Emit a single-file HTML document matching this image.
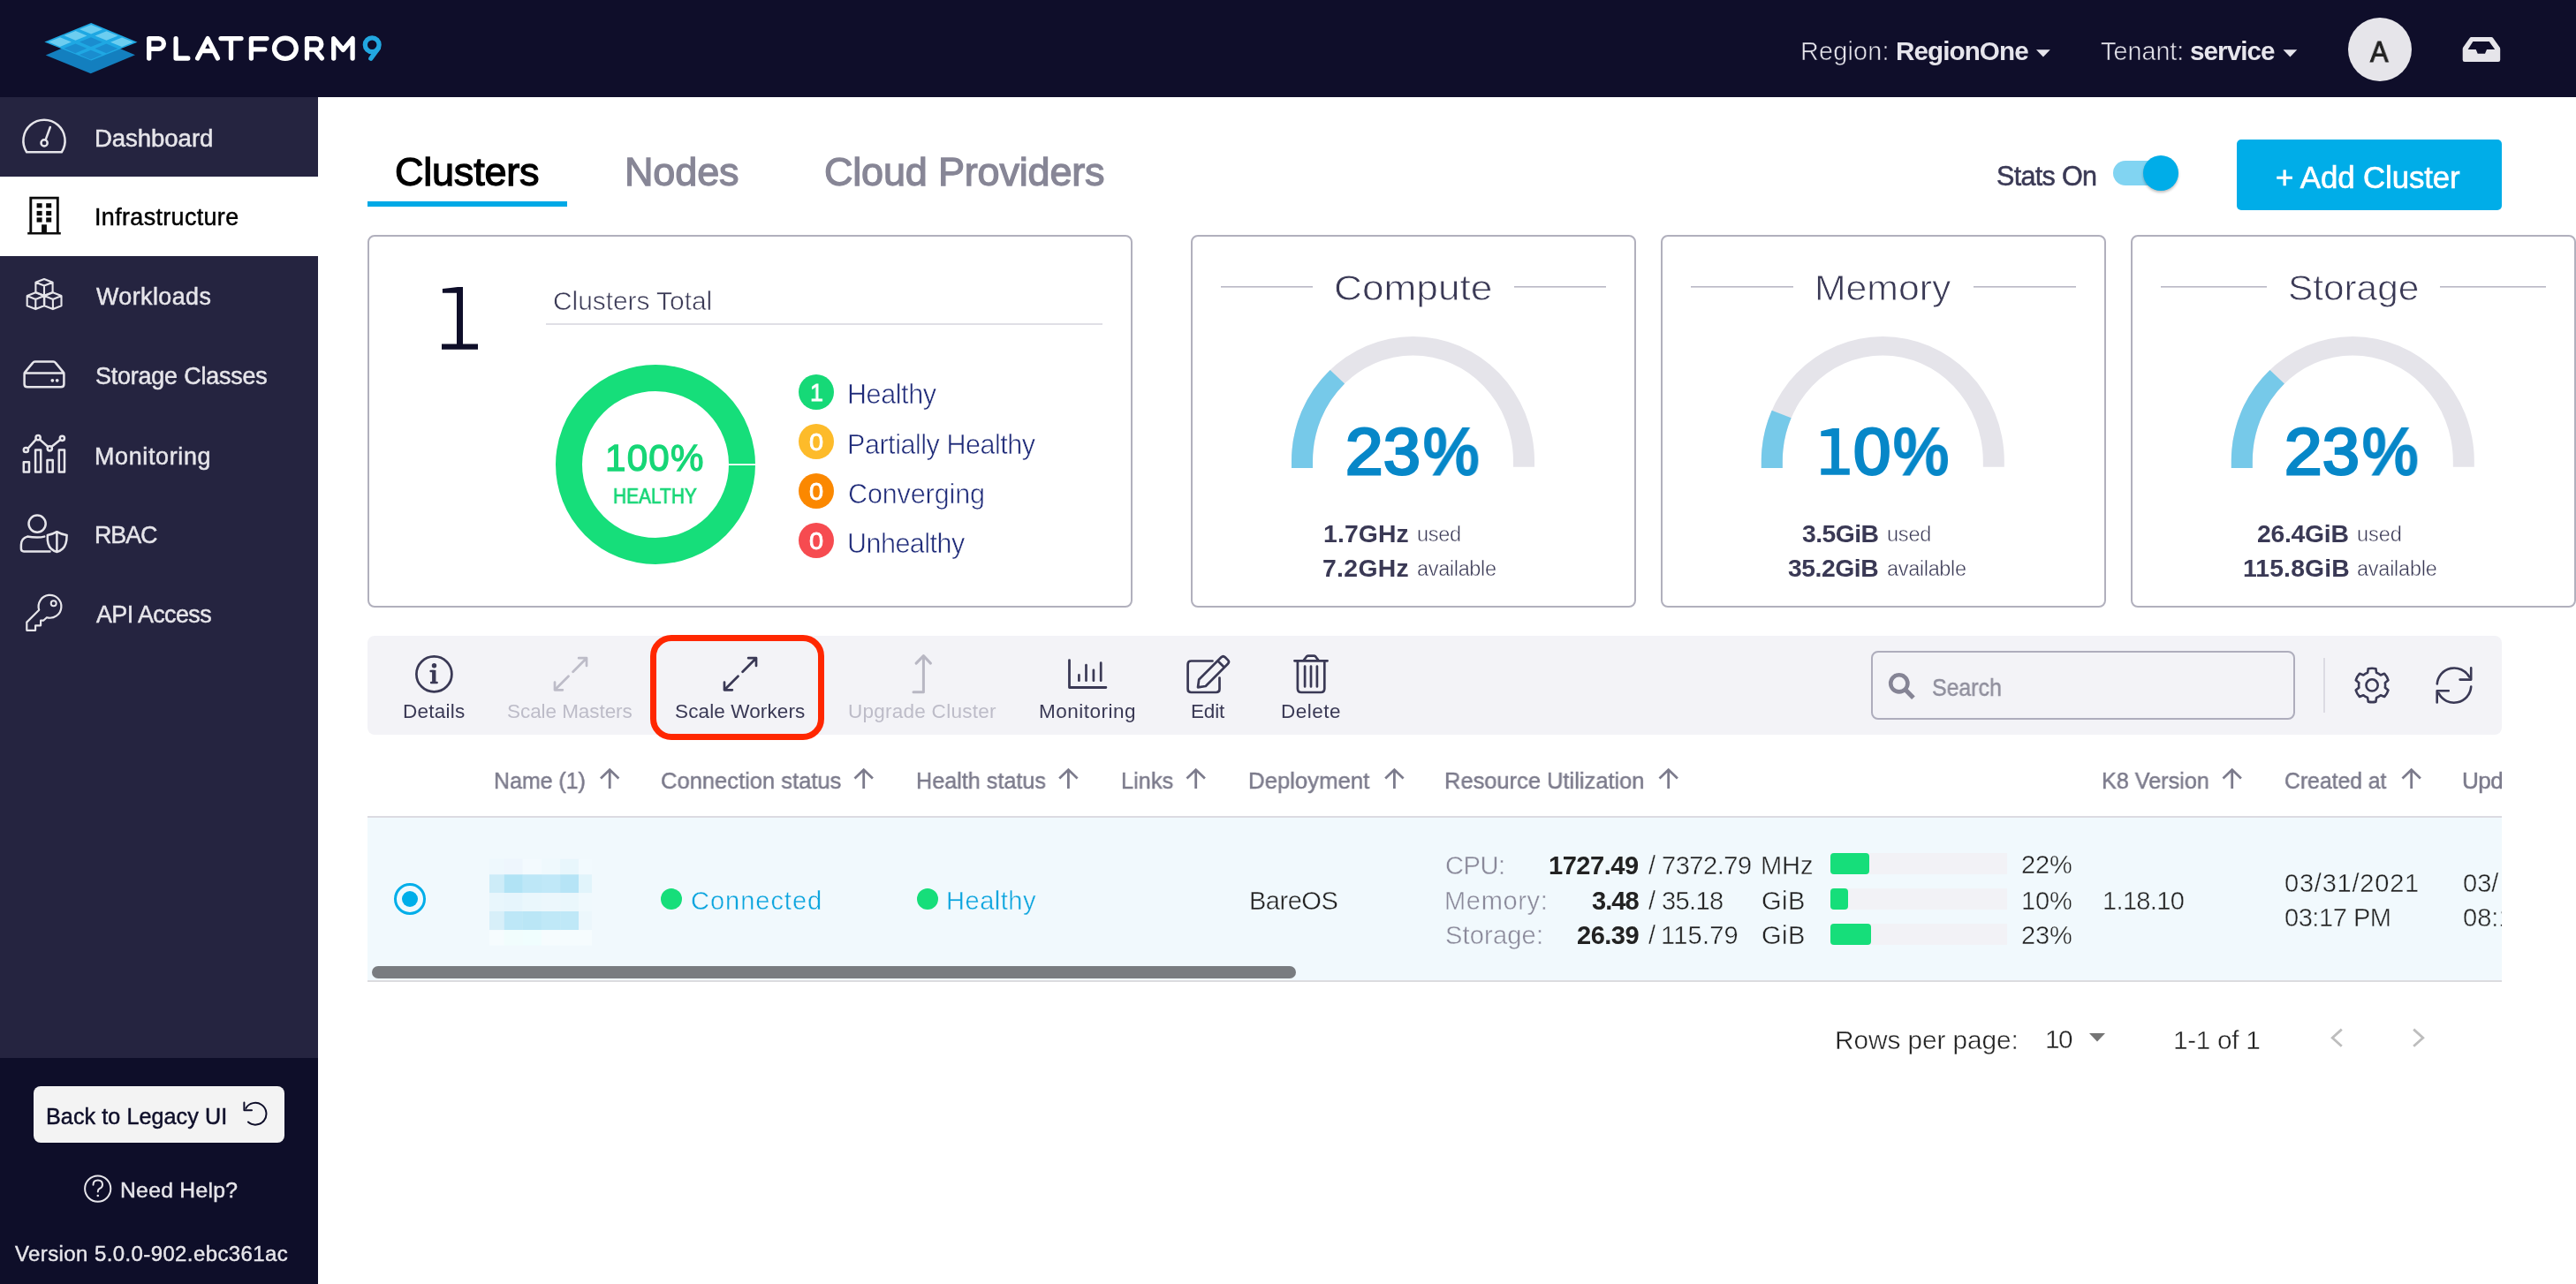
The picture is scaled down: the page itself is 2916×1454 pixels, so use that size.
<!DOCTYPE html>
<html><head><meta charset="utf-8"><title>Platform9 - Clusters</title>
<style>
html,body{margin:0;padding:0;}
body{width:2916px;height:1454px;position:relative;overflow:hidden;background:#fff;font-family:"Liberation Sans",sans-serif;}
.t{position:absolute;line-height:1;white-space:nowrap;will-change:transform;}
.a{position:absolute;}
svg{position:absolute;overflow:visible;}
</style></head><body>
<div class="a" style="left:0px;top:0px;width:2916px;height:110px;background:#0f0e2a;"></div><div class="a" style="left:0px;top:110px;width:360px;height:1088px;background:#252440;"></div><div class="a" style="left:0px;top:200px;width:360px;height:90px;background:#ffffff;"></div><div class="a" style="left:0px;top:1198px;width:360px;height:256px;background:#0e0e29;"></div><div class="a" style="left:38px;top:1230px;width:284px;height:64px;background:#f3f3f3;border-radius:8px;"></div><div class="a" style="left:416px;top:228px;width:226px;height:6px;background:#00a9e6;"></div><div class="a" style="left:2392px;top:182px;width:56px;height:28px;background:#81d4f2;border-radius:14px;"></div><div class="a" style="left:2426px;top:176px;width:40px;height:40px;border-radius:50%;background:#00ade8;box-shadow:0 2px 3px rgba(0,0,0,0.25);"></div><div class="a" style="left:2532px;top:158px;width:300px;height:80px;background:#00ade8;border-radius:5px;"></div><div class="a" style="left:416px;top:266px;width:862px;height:418px;border:2px solid #b1b0bd;border-radius:8px;"></div><div class="a" style="left:1348px;top:266px;width:500px;height:418px;border:2px solid #b1b0bd;border-radius:8px;"></div><div class="a" style="left:1880px;top:266px;width:500px;height:418px;border:2px solid #b1b0bd;border-radius:8px;"></div><div class="a" style="left:2412px;top:266px;width:500px;height:418px;border:2px solid #b1b0bd;border-radius:8px;"></div><div class="a" style="left:618px;top:365.7px;width:630px;height:2px;background:#e0dfe6;"></div><div class="a" style="left:416px;top:720px;width:2416px;height:112px;background:#f3f3f7;border-radius:8px;"></div><div class="a" style="left:2118px;top:737px;width:476px;height:74px;border:2px solid #aeadbc;border-radius:8px;"></div><div class="a" style="left:2630px;top:744.5px;width:2px;height:62.5px;background:#dcdbe3;"></div><div class="a" style="left:416px;top:924px;width:2416px;height:2px;background:#dcdbe2;"></div><div class="a" style="left:416px;top:926px;width:2416px;height:184px;background:#f1f9fd;"></div><div class="a" style="left:416px;top:1110px;width:2416px;height:2px;background:#dcdcdf;"></div><div class="a" style="left:420.5px;top:1094px;width:1046px;height:14px;background:#797c80;border-radius:7px;"></div><div class="a" style="left:445.8px;top:999.7px;width:36.2px;height:36.2px;box-sizing:border-box;border:3.7px solid #00aee9;border-radius:50%;"></div><div class="a" style="left:454.8px;top:1008.7px;width:18.3px;height:18.3px;border-radius:50%;background:#00aee9;"></div><div class="a" style="left:748px;top:1006px;width:24.4px;height:24.4px;border-radius:50%;background:#16de7a;"></div><div class="a" style="left:1038px;top:1006px;width:24.4px;height:24.4px;border-radius:50%;background:#16de7a;"></div><div class="a" style="left:2072px;top:966px;width:200px;height:23.6px;background:#f2f2f6;"></div><div class="a" style="left:2072px;top:1006px;width:200px;height:23.6px;background:#f2f2f6;"></div><div class="a" style="left:2072px;top:1046px;width:200px;height:23.6px;background:#f2f2f6;"></div><div class="a" style="left:2072px;top:966px;width:44px;height:23.6px;background:#16de7a;border-radius:4px;"></div><div class="a" style="left:2072px;top:1006px;width:20px;height:23.6px;background:#16de7a;border-radius:4px;"></div><div class="a" style="left:2072px;top:1046px;width:46px;height:23.6px;background:#16de7a;border-radius:4px;"></div><svg style="left:0;top:0" width="900" height="1200"><rect x="554" y="972.8" width="17.0" height="17.7" fill="#eef8fd"/><rect x="570.8" y="972.8" width="21.1" height="17.7" fill="#eef6fd"/><rect x="591.7" y="972.8" width="21.4" height="17.7" fill="#f3fafe"/><rect x="612.9" y="972.8" width="21.4" height="17.7" fill="#eff9fd"/><rect x="634.1" y="972.8" width="21.2" height="17.7" fill="#e8f6fc"/><rect x="655.1" y="972.8" width="14.9" height="17.7" fill="#f2fafe"/><rect x="554" y="990.3" width="17.0" height="21.0" fill="#cdecf8"/><rect x="570.8" y="990.3" width="21.1" height="21.0" fill="#b1e3f5"/><rect x="591.7" y="990.3" width="21.4" height="21.0" fill="#bde7f7"/><rect x="612.9" y="990.3" width="21.4" height="21.0" fill="#c0e8f8"/><rect x="634.1" y="990.3" width="21.2" height="21.0" fill="#b6e4f6"/><rect x="655.1" y="990.3" width="14.9" height="21.0" fill="#e1f4fb"/><rect x="554" y="1011.1" width="17.0" height="21.1" fill="#e8f6fc"/><rect x="570.8" y="1011.1" width="21.1" height="21.1" fill="#e6f5fc"/><rect x="591.7" y="1011.1" width="21.4" height="21.1" fill="#eaf7fc"/><rect x="612.9" y="1011.1" width="21.4" height="21.1" fill="#ecf7fc"/><rect x="634.1" y="1011.1" width="21.2" height="21.1" fill="#eaf7fc"/><rect x="655.1" y="1011.1" width="14.9" height="21.1" fill="#f0f9fd"/><rect x="554" y="1032" width="17.0" height="21.3" fill="#d7eff9"/><rect x="570.8" y="1032" width="21.1" height="21.3" fill="#bde7f7"/><rect x="591.7" y="1032" width="21.4" height="21.3" fill="#bae6f6"/><rect x="612.9" y="1032" width="21.4" height="21.3" fill="#bfe8f7"/><rect x="634.1" y="1032" width="21.2" height="21.3" fill="#bfe8f7"/><rect x="655.1" y="1032" width="14.9" height="21.3" fill="#ecf7fc"/><rect x="554" y="1053.1" width="17.0" height="17.6" fill="#f6fcfe"/><rect x="570.8" y="1053.1" width="21.1" height="17.6" fill="#f1fdfd"/><rect x="591.7" y="1053.1" width="21.4" height="17.6" fill="#f0fefe"/><rect x="612.9" y="1053.1" width="21.4" height="17.6" fill="#f6fcfe"/><rect x="634.1" y="1053.1" width="21.2" height="17.6" fill="#f5fcfe"/><rect x="655.1" y="1053.1" width="14.9" height="17.6" fill="#f6fcfe"/></svg><svg style="left:0;top:0" width="200" height="100"><polygon points="51.70,62.50 102.70,41.00 153.00,62.20 102.70,83.20" fill="#137fbf"/><polygon points="103.20,26.00 155.50,47.80 103.20,68.50 50.40,47.50" fill="#1fa8e3"/><polygon points="103.18,27.88 116.08,33.25 103.06,38.56 90.15,33.18" fill="#6ccdf0"/><polygon points="85.58,35.04 98.48,40.42 85.45,45.72 72.55,40.35" fill="#6ccdf0"/><polygon points="67.98,42.21 80.88,47.59 67.85,52.89 54.95,47.51" fill="#6ccdf0"/><polygon points="120.61,35.14 133.51,40.52 120.49,45.82 107.59,40.45" fill="#6ccdf0"/><polygon points="103.01,42.31 115.91,47.69 102.89,52.99 89.99,47.61" fill="#1a8dcf"/><polygon points="85.41,49.48 98.31,54.85 85.29,60.16 72.39,54.78" fill="#1a8dcf"/><polygon points="138.04,42.41 150.95,47.79 137.92,53.09 125.02,47.71" fill="#6ccdf0"/><polygon points="120.44,49.58 133.35,54.95 120.32,60.26 107.42,54.88" fill="#1a8dcf"/><polygon points="102.84,56.74 115.75,62.12 102.72,67.42 89.82,62.05" fill="#1a8dcf"/></svg><svg style="left:0;top:0" width="460" height="100"><path d="M168.7 66.0 V43.6 H179.5 A5.6 5.6 0 0 1 179.5 55.4 H168.7 M199.1 43.6 V66.0 H212.8 M223.6 66.0 L235.1 43.6 L246.4 66.0 M228.2 57.6 H242.0 M250.0 43.6 H273.0 M261.5 43.6 V66.0 M302.0 43.6 H284.4 V66.0 M284.4 55.8 H299.8 M335.3 54.8 A12.4 11.6 0 1 1 310.5 54.8 A12.4 11.6 0 1 1 335.3 54.8 Z M347.5 66.0 V43.6 H357.5 A5.7 5.7 0 0 1 357.5 56.2 H347.5 M356.5 56.2 L364.4 66.0 M377.7 66.0 V43.6 L388.4 56.5 L399.1 43.6 V66.0" fill="none" stroke="#ffffff" stroke-width="5.3" stroke-linecap="round" stroke-linejoin="round"/><circle cx="421.2" cy="50.7" r="7.9" fill="none" stroke="#22a7e0" stroke-width="5.3"/><path d="M428.2 54.6 L419.8 66.2" fill="none" stroke="#22a7e0" stroke-width="5.3" stroke-linecap="round"/></svg><svg style="left:0;top:0" width="2916" height="110"><polygon points="2305.00,56.20 2320.80,56.20 2312.90,64.60" fill="#e6e5ec"/><polygon points="2584.50,56.20 2600.30,56.20 2592.40,64.60" fill="#e6e5ec"/><circle cx="2694" cy="56" r="36" fill="#e6e5ea"/><path fill="#e6e5ea" fill-rule="evenodd" d="M2797.5 42 H2820.2 Q2821.4 42 2822.1 43 L2829.6 53.5 Q2830.2 54.4 2830.2 55.6 V67.8 Q2830.2 70 2828 70 H2790 Q2787.7 70 2787.7 67.8 V55.6 Q2787.7 54.4 2788.3 53.5 L2795.7 43 Q2796.4 42 2797.5 42 Z M2799.4 46.9 H2817.7 L2824.2 55.9 H2815 L2813 60.7 H2804.7 L2802.7 55.9 H2793.7 Z"/></svg><svg style="left:0;top:0" width="360" height="1454" fill="none" stroke-linecap="round" stroke-linejoin="round"><path d="M30.2 172.2 A23.6 23.6 0 1 1 69.8 172.2 Z" stroke="#e6e5ea" stroke-width="2.5"/><circle cx="50.1" cy="161.9" r="3.6" stroke="#e6e5ea" stroke-width="2.5"/><path d="M51.6 158.4 L56.8 144" stroke="#e6e5ea" stroke-width="2.5"/><path d="M34.8 264 V224.1 H65.3 V264" stroke="#0b0b0b" stroke-width="2.9" stroke-linecap="butt" stroke-linejoin="miter"/><path d="M31.2 264.2 H68.8" stroke="#0b0b0b" stroke-width="2.6" stroke-linecap="butt"/><rect x="41.6" y="230.2" width="6.0" height="5.2" fill="#0b0b0b" stroke="none"/><rect x="52.2" y="230.2" width="6.0" height="5.2" fill="#0b0b0b" stroke="none"/><rect x="41.6" y="238.9" width="6.0" height="5.2" fill="#0b0b0b" stroke="none"/><rect x="52.2" y="238.9" width="6.0" height="5.2" fill="#0b0b0b" stroke="none"/><rect x="41.6" y="246.4" width="6.0" height="5.2" fill="#0b0b0b" stroke="none"/><rect x="52.2" y="246.4" width="6.0" height="5.2" fill="#0b0b0b" stroke="none"/><rect x="47.1" y="254.3" width="5.8" height="10" fill="#0b0b0b" stroke="none"/><path d="M50.00 316.00 L59.60 319.80 L59.60 331.00 L50.00 334.80 L40.40 331.00 L40.40 319.80 Z M40.40 319.80 L50.00 323.60 L59.60 319.80 M50.00 323.60 L50.00 334.80" stroke="#e6e5ea" stroke-width="2.1"/><path d="M40.30 331.30 L49.90 335.10 L49.90 346.30 L40.30 350.10 L30.70 346.30 L30.70 335.10 Z M30.70 335.10 L40.30 338.90 L49.90 335.10 M40.30 338.90 L40.30 350.10" stroke="#e6e5ea" stroke-width="2.1"/><path d="M59.90 331.30 L69.50 335.10 L69.50 346.30 L59.90 350.10 L50.30 346.30 L50.30 335.10 Z M50.30 335.10 L59.90 338.90 L69.50 335.10 M59.90 338.90 L59.90 350.10" stroke="#e6e5ea" stroke-width="2.1"/><path d="M39.6 409.6 H60.4 Q62 409.6 62.9 410.9 L71.6 421.4 Q72.4 422.4 72.4 424 V434.9 Q72.4 438.3 69 438.3 H31 Q27.6 438.3 27.6 434.9 V424 Q27.6 422.4 28.4 421.4 L37.1 410.9 Q38 409.6 39.6 409.6 Z M27.6 422.4 H72.4" stroke="#e6e5ea" stroke-width="2.5"/><circle cx="59.3" cy="430.8" r="1.9" fill="#e6e5ea" stroke="none"/><circle cx="64.7" cy="430.8" r="1.9" fill="#e6e5ea" stroke="none"/><rect x="26.8" y="523.2" width="6.20" height="11.40" stroke="#e6e5ea" stroke-width="2.5"/><rect x="40.1" y="509.4" width="6.10" height="25.20" stroke="#e6e5ea" stroke-width="2.5"/><rect x="53.5" y="521.0" width="6.20" height="13.60" stroke="#e6e5ea" stroke-width="2.5"/><rect x="66.8" y="509.4" width="6.20" height="25.20" stroke="#e6e5ea" stroke-width="2.5"/><path d="M31.6 507.9 L41.0 497.4 M45.2 497.9 L54.1 505.7 M58.6 505.8 L68.2 498.0" stroke="#e6e5ea" stroke-width="2.5"/><circle cx="29.4" cy="509.5" r="2.6" stroke="#e6e5ea" stroke-width="2.5"/><circle cx="43.1" cy="495.7" r="2.6" stroke="#e6e5ea" stroke-width="2.5"/><circle cx="56.3" cy="507.8" r="2.6" stroke="#e6e5ea" stroke-width="2.5"/><circle cx="70.4" cy="496.3" r="2.6" stroke="#e6e5ea" stroke-width="2.5"/><circle cx="42.1" cy="593.1" r="9.6" stroke="#e6e5ea" stroke-width="2.5"/><path d="M50.2 607.6 Q47 608.6 42 608.6 Q36 608.6 31 607.6 Q23.9 609.5 23.9 617 V621.3 Q23.9 624.4 27 624.4 H56.5" stroke="#e6e5ea" stroke-width="2.5"/><path d="M64.4 602.2 Q58.8 605.5 53.8 606 Q53.2 617.5 58 621.5 Q61 624.2 64.4 625 Q67.8 624.2 70.8 621.5 Q75.6 617.5 75.6 606 Q70 605.5 64.4 602.2 Z M64.4 602.2 V625" stroke="#e6e5ea" stroke-width="2.5"/><path d="M44.2 690.7 L30.3 704.6 V713.8 H40.1 V708.3 H46.1 V702.7 H49.1 L53 699.2 A12.9 12.9 0 1 0 44.2 690.7 Z" stroke="#e6e5ea" stroke-width="2.2"/><circle cx="60.7" cy="683.2" r="3.0" stroke="#e6e5ea" stroke-width="2.0"/><circle cx="110.7" cy="1346.1" r="14.6" stroke="#e6e5ea" stroke-width="2.0"/><path d="M105.5 1341.8 Q105.5 1336.4 110.8 1336.4 Q116 1336.4 116 1341.4 Q116 1344.5 112.6 1346 Q110.8 1346.8 110.8 1349.6" stroke="#e6e5ea" stroke-width="2.0"/><circle cx="110.8" cy="1354.0" r="1.3" fill="#e6e5ea" stroke="none"/><path d="M280.9 1270.6 A12.4 12.4 0 1 0 278.4 1254.9" stroke="#0e0e29" stroke-width="2.0"/><path d="M276.4 1248.6 V1257.2 H285" stroke="#0e0e29" stroke-width="2.0"/></svg><svg style="left:0;top:0" width="2916" height="700"><path d="M1462.00 530.0 L1462.00 522.0 A137.5 141.0 0 0 1 1737.00 522.0 L1737.00 528.8 L1713.00 528.8 L1713.00 522.0 A113.5 119.6 0 0 0 1486.00 522.0 L1486.00 530.0 Z" fill="#e5e4ea"/><path d="M1462.00 530.0 L1462.00 522.0 A137.5 141.0 0 0 1 1505.73 418.88 L1522.09 434.53 A113.5 119.6 0 0 0 1486.00 522.0 L1486.00 530.0 Z" fill="#76c9e9"/><path d="M1993.80 530.0 L1993.80 522.0 A137.5 141.0 0 0 1 2268.80 522.0 L2268.80 528.8 L2244.80 528.8 L2244.80 522.0 A113.5 119.6 0 0 0 2017.80 522.0 L2017.80 530.0 Z" fill="#e5e4ea"/><path d="M1993.80 530.0 L1993.80 522.0 A137.5 141.0 0 0 1 2005.69 464.65 L2027.61 473.35 A113.5 119.6 0 0 0 2017.80 522.0 L2017.80 530.0 Z" fill="#76c9e9"/><path d="M2525.80 530.0 L2525.80 522.0 A137.5 141.0 0 0 1 2800.80 522.0 L2800.80 528.8 L2776.80 528.8 L2776.80 522.0 A113.5 119.6 0 0 0 2549.80 522.0 L2549.80 530.0 Z" fill="#e5e4ea"/><path d="M2525.80 530.0 L2525.80 522.0 A137.5 141.0 0 0 1 2569.53 418.88 L2585.89 434.53 A113.5 119.6 0 0 0 2549.80 522.0 L2549.80 530.0 Z" fill="#76c9e9"/><circle cx="742" cy="526" r="98" fill="none" stroke="#16de7a" stroke-width="30"/><rect x="825" y="525.2" width="31" height="1.8" fill="#fff"/><circle cx="924" cy="444" r="20" fill="#16d977"/><circle cx="924" cy="500" r="20" fill="#fdbb2a"/><circle cx="924" cy="556" r="20" fill="#fb8800"/><circle cx="924" cy="612" r="20" fill="#f64b50"/><rect x="1382" y="324" width="104" height="1.6" fill="#b9b8c5"/><rect x="1714" y="324" width="104" height="1.6" fill="#b9b8c5"/><rect x="1914" y="324" width="116" height="1.6" fill="#b9b8c5"/><rect x="2234" y="324" width="116" height="1.6" fill="#b9b8c5"/><rect x="2446" y="324" width="120" height="1.6" fill="#b9b8c5"/><rect x="2762" y="324" width="120" height="1.6" fill="#b9b8c5"/><path d="M500.9 327 L518 325 H524 V389.6 H541 V395.7 H500 V389.6 H517 V331.8 H500.9 Z" fill="#0e0e29"/><path d="M2061.3 488.3 L2074.6 485 H2081.9 V530.4 H2093.8 V537.8 H2061.3 V530.4 H2073.2 V494.1 H2061.3 Z" fill="#0787c8"/></svg><svg style="left:0;top:0" width="2916" height="900" fill="none" stroke-linecap="round" stroke-linejoin="round"><circle cx="491.4" cy="763.4" r="20" stroke="#3a3955" stroke-width="2.7"/><circle cx="491.5" cy="753.8" r="2.7" fill="#3a3955" stroke="none"/><path d="M487.6 760.1 H491.2 V772.9 M488.1 772.9 H494.6" stroke="#3a3955" stroke-width="2.5"/><rect x="489.1" y="758.9" width="4.3" height="14" fill="#3a3955"/><path d="M655.1 745.2 H664.0 V753.9 M664.0 745.2 L648.6 760.7 M628.0 772.6 V781.3 H636.9 M628.0 781.3 L643.5 765.8" stroke="#bdbcc8" stroke-width="2.7"/><path d="M847.1 745.2 H856.0 V753.9 M856.0 745.2 L840.6 760.7 M820.0 772.6 V781.3 H828.9 M820.0 781.3 L835.5 765.8" stroke="#3a3955" stroke-width="2.7"/><path d="M1037.1 751.1 L1045.4 742.6 L1053.4 751.1 M1045.4 743.2 V783.8 H1034.0" stroke="#b8b7c3" stroke-width="3"/><path d="M1210.5 747.6 V778.5 H1251.9" stroke="#3a3955" stroke-width="2.8"/><path d="M1221.4 764.4 V770.7" stroke="#3a3955" stroke-width="2.7"/><path d="M1229.5 753.2 V770.7" stroke="#3a3955" stroke-width="2.7"/><path d="M1237.9 758.8 V770.7" stroke="#3a3955" stroke-width="2.7"/><path d="M1246.2 750.7 V770.7" stroke="#3a3955" stroke-width="2.7"/><path d="M1372.5 748.5 H1348.4 Q1344.6 748.5 1344.6 752.3 V780.2 Q1344.6 784 1348.4 784 H1376.7 Q1380.5 784 1380.5 780.2 V767.6" stroke="#3a3955" stroke-width="2.7"/><path d="M1357.2 769.5 L1382.4 744.3 Q1384.6 742.1 1386.8 744.3 L1389.9 747.4 Q1392.1 749.6 1389.9 751.8 L1364.8 777 L1356 778.4 Z M1378.4 748.3 L1385.9 755.8" stroke="#3a3955" stroke-width="2.7"/><path d="M1465.4 748.3 H1502.6 M1475.9 747.6 L1479.2 743.3 Q1479.9 742.7 1480.8 742.7 H1487.4 Q1488.3 742.7 1489 743.3 L1492.3 747.6 M1468.9 749 V779.8 Q1468.9 784 1473.1 784 H1495.1 Q1499.3 784 1499.3 779.8 V749 M1477.1 754.6 V777.5 M1484.0 754.6 V777.5 M1490.9 754.6 V777.5" stroke="#3a3955" stroke-width="2.7"/><circle cx="2149.8" cy="773.8" r="9.6" stroke="#858495" stroke-width="4.6"/><path d="M2156.6 780.8 L2165.9 790.3" stroke="#858495" stroke-width="5.2" stroke-linecap="butt"/><path d="M2680.09 761.76 L2680.78 757.19 A19.2 19.2 0 0 1 2689.42 757.19 L2690.11 761.76 A15.0 15.0 0 0 1 2694.84 764.49 L2699.14 762.81 A19.2 19.2 0 0 1 2703.46 770.29 L2699.85 773.17 A15.0 15.0 0 0 1 2699.85 778.63 L2703.46 781.51 A19.2 19.2 0 0 1 2699.14 788.99 L2694.84 787.31 A15.0 15.0 0 0 1 2690.11 790.04 L2689.42 794.61 A19.2 19.2 0 0 1 2680.78 794.61 L2680.09 790.04 A15.0 15.0 0 0 1 2675.36 787.31 L2671.06 788.99 A19.2 19.2 0 0 1 2666.74 781.51 L2670.35 778.63 A15.0 15.0 0 0 1 2670.35 773.17 L2666.74 770.29 A19.2 19.2 0 0 1 2671.06 762.81 L2675.36 764.49 A15.0 15.0 0 0 1 2680.09 761.76 Z" stroke="#3a3955" stroke-width="2.6"/><circle cx="2685.1" cy="775.9" r="6.6" stroke="#3a3955" stroke-width="2.6"/><path d="M2758.8 774.4 A19.4 19.4 0 0 1 2795.2 766.6 M2797.2 756.4 V769.6 H2784.6" stroke="#3a3955" stroke-width="2.6"/><path d="M2797.2 777.6 A19.4 19.4 0 0 1 2760.6 785.2 M2758.7 795.4 V782.3 H2771.8" stroke="#3a3955" stroke-width="2.6"/><path d="M690.2 893 V872 M680.0 881.4 L690.2 871.6 L700.4 881.4" stroke="#7c7b8c" stroke-width="2.8" stroke-linecap="butt" stroke-linejoin="miter"/><path d="M977.7 893 V872 M967.5 881.4 L977.7 871.6 L987.9 881.4" stroke="#7c7b8c" stroke-width="2.8" stroke-linecap="butt" stroke-linejoin="miter"/><path d="M1209.4 893 V872 M1199.2 881.4 L1209.4 871.6 L1219.6 881.4" stroke="#7c7b8c" stroke-width="2.8" stroke-linecap="butt" stroke-linejoin="miter"/><path d="M1353.7 893 V872 M1343.5 881.4 L1353.7 871.6 L1363.9 881.4" stroke="#7c7b8c" stroke-width="2.8" stroke-linecap="butt" stroke-linejoin="miter"/><path d="M1578.4 893 V872 M1568.2 881.4 L1578.4 871.6 L1588.6 881.4" stroke="#7c7b8c" stroke-width="2.8" stroke-linecap="butt" stroke-linejoin="miter"/><path d="M1888.7 893 V872 M1878.5 881.4 L1888.7 871.6 L1898.9 881.4" stroke="#7c7b8c" stroke-width="2.8" stroke-linecap="butt" stroke-linejoin="miter"/><path d="M2526.7 893 V872 M2516.5 881.4 L2526.7 871.6 L2536.9 881.4" stroke="#7c7b8c" stroke-width="2.8" stroke-linecap="butt" stroke-linejoin="miter"/><path d="M2729.7 893 V872 M2719.5 881.4 L2729.7 871.6 L2739.9 881.4" stroke="#7c7b8c" stroke-width="2.8" stroke-linecap="butt" stroke-linejoin="miter"/></svg>
<div class="t" style="left:2038.00px;top:43.93px;font-size:28.78px;color:#e6e5ec;-webkit-text-stroke:0.58px #0f0e2a;letter-spacing:0.24px;">Region:</div>
<div class="t" style="left:2145.80px;top:43.19px;font-size:29.65px;color:#e6e5ec;font-weight:700;letter-spacing:-0.93px;">RegionOne</div>
<div class="t" style="left:2378.20px;top:43.93px;font-size:28.78px;color:#e6e5ec;-webkit-text-stroke:0.58px #0f0e2a;">Tenant:</div>
<div class="t" style="left:2479.00px;top:43.19px;font-size:29.65px;color:#e6e5ec;font-weight:700;letter-spacing:-0.95px;">service</div>
<div class="t" style="left:2682.70px;top:42.19px;font-size:33.43px;color:#222;-webkit-text-stroke:1.00px #222;transform:scaleX(0.9217);transform-origin:0 0;">A</div>
<div class="t" style="left:107.00px;top:143.12px;font-size:27.62px;color:#e6e5ea;-webkit-text-stroke:0.50px #e6e5ea;letter-spacing:-0.09px;">Dashboard</div>
<div class="t" style="left:106.50px;top:233.33px;font-size:26.89px;color:#000;-webkit-text-stroke:0.48px #000;letter-spacing:0.37px;">Infrastructure</div>
<div class="t" style="left:108.50px;top:323.33px;font-size:26.89px;color:#e6e5ea;-webkit-text-stroke:0.48px #e6e5ea;letter-spacing:0.43px;">Workloads</div>
<div class="t" style="left:107.50px;top:413.33px;font-size:26.89px;color:#e6e5ea;-webkit-text-stroke:0.48px #e6e5ea;letter-spacing:-0.18px;">Storage Classes</div>
<div class="t" style="left:107.00px;top:504.03px;font-size:26.89px;color:#e6e5ea;-webkit-text-stroke:0.48px #e6e5ea;letter-spacing:0.67px;">Monitoring</div>
<div class="t" style="left:107.00px;top:593.43px;font-size:26.89px;color:#e6e5ea;-webkit-text-stroke:0.48px #e6e5ea;letter-spacing:-1.09px;">RBAC</div>
<div class="t" style="left:109.00px;top:683.23px;font-size:26.89px;color:#e6e5ea;-webkit-text-stroke:0.48px #e6e5ea;letter-spacing:-0.59px;">API Access</div>
<div class="t" style="left:52.40px;top:1251.61px;font-size:25.15px;color:#0e0e29;-webkit-text-stroke:0.45px #0e0e29;letter-spacing:0.07px;">Back to Legacy UI</div>
<div class="t" style="left:136.30px;top:1335.58px;font-size:24.71px;color:#e6e5ea;-webkit-text-stroke:0.44px #e6e5ea;letter-spacing:0.28px;">Need Help?</div>
<div class="t" style="left:16.60px;top:1407.69px;font-size:23.98px;color:#e6e5ea;-webkit-text-stroke:0.43px #e6e5ea;letter-spacing:0.41px;">Version 5.0.0-902.ebc361ac</div>
<div class="t" style="left:447.00px;top:172.35px;font-size:45.06px;color:#000;-webkit-text-stroke:1.26px #000;letter-spacing:-0.24px;">Clusters</div>
<div class="t" style="left:707.00px;top:172.35px;font-size:45.06px;color:#878696;-webkit-text-stroke:1.26px #878696;letter-spacing:-0.17px;">Nodes</div>
<div class="t" style="left:933.00px;top:172.35px;font-size:45.06px;color:#878696;-webkit-text-stroke:1.26px #878696;letter-spacing:-0.21px;">Cloud Providers</div>
<div class="t" style="left:2260.00px;top:183.66px;font-size:30.52px;color:#3a3955;-webkit-text-stroke:0.55px #3a3955;letter-spacing:-0.68px;">Stats On</div>
<div class="t" style="left:2576.00px;top:183.96px;font-size:34.88px;color:#fff;-webkit-text-stroke:0.63px #fff;letter-spacing:-0.14px;">+ Add Cluster</div>
<div class="t" style="left:626.00px;top:325.75px;font-size:29.94px;color:#3a3955;-webkit-text-stroke:0.60px #ffffff;letter-spacing:-0.05px;">Clusters Total</div>
<div class="t" style="left:685.00px;top:497.81px;font-size:42.15px;color:#16d676;-webkit-text-stroke:1.26px #16d676;letter-spacing:1.23px;">100%</div>
<div class="t" style="left:694.11px;top:550.56px;font-size:23.55px;color:#16d676;-webkit-text-stroke:0.71px #16d676;transform:scaleX(0.8860);transform-origin:0 0;">HEALTHY</div>
<div class="t" style="left:916.61px;top:430.23px;font-size:28.20px;color:#fff;-webkit-text-stroke:0.85px #fff;transform:scaleX(0.9462);transform-origin:0 0;">1</div>
<div class="t" style="left:915.77px;top:486.23px;font-size:28.20px;color:#fff;-webkit-text-stroke:0.85px #fff;transform:scaleX(1.0286);transform-origin:0 0;">0</div>
<div class="t" style="left:915.77px;top:542.23px;font-size:28.20px;color:#fff;-webkit-text-stroke:0.85px #fff;transform:scaleX(1.0286);transform-origin:0 0;">0</div>
<div class="t" style="left:915.77px;top:598.23px;font-size:28.20px;color:#fff;-webkit-text-stroke:0.85px #fff;transform:scaleX(1.0286);transform-origin:0 0;">0</div>
<div class="t" style="left:959.00px;top:431.46px;font-size:30.52px;color:#1e2a78;-webkit-text-stroke:0.61px #ffffff;letter-spacing:-0.42px;">Healthy</div>
<div class="t" style="left:959.00px;top:487.56px;font-size:30.52px;color:#1e2a78;-webkit-text-stroke:0.61px #ffffff;letter-spacing:-0.46px;">Partially Healthy</div>
<div class="t" style="left:960.00px;top:543.66px;font-size:30.52px;color:#1e2a78;-webkit-text-stroke:0.61px #ffffff;letter-spacing:-0.12px;">Converging</div>
<div class="t" style="left:959.00px;top:599.66px;font-size:30.52px;color:#1e2a78;-webkit-text-stroke:0.61px #ffffff;letter-spacing:-0.52px;">Unhealthy</div>
<div class="t" style="left:1509.83px;top:306.44px;font-size:40.70px;color:#3a3955;-webkit-text-stroke:0.81px #ffffff;transform:scaleX(1.0869);transform-origin:0 0;">Compute</div>
<div class="t" style="left:2053.85px;top:306.44px;font-size:40.70px;color:#3a3955;-webkit-text-stroke:0.81px #ffffff;transform:scaleX(1.0498);transform-origin:0 0;">Memory</div>
<div class="t" style="left:2589.96px;top:306.44px;font-size:40.70px;color:#3a3955;-webkit-text-stroke:0.81px #ffffff;transform:scaleX(1.0402);transform-origin:0 0;">Storage</div>
<div class="t" style="left:1522.87px;top:475.77px;font-size:73.26px;color:#0787c8;-webkit-text-stroke:2.93px #0787c8;transform:scaleX(1.0429);transform-origin:0 0;">2</div>
<div class="t" style="left:1565.94px;top:475.77px;font-size:73.26px;color:#0787c8;-webkit-text-stroke:2.93px #0787c8;transform:scaleX(1.0278);transform-origin:0 0;">3</div>
<div class="t" style="left:1611.05px;top:475.77px;font-size:73.26px;color:#0787c8;-webkit-text-stroke:2.93px #0787c8;transform:scaleX(0.9738);transform-origin:0 0;">%</div>
<div class="t" style="left:2097.62px;top:475.77px;font-size:73.26px;color:#0787c8;-webkit-text-stroke:2.93px #0787c8;transform:scaleX(1.0389);transform-origin:0 0;">0</div>
<div class="t" style="left:2142.86px;top:475.77px;font-size:73.26px;color:#0787c8;-webkit-text-stroke:2.93px #0787c8;transform:scaleX(0.9689);transform-origin:0 0;">%</div>
<div class="t" style="left:2586.17px;top:475.77px;font-size:73.26px;color:#0787c8;-webkit-text-stroke:2.93px #0787c8;transform:scaleX(1.0429);transform-origin:0 0;">2</div>
<div class="t" style="left:2629.24px;top:475.77px;font-size:73.26px;color:#0787c8;-webkit-text-stroke:2.93px #0787c8;transform:scaleX(1.0278);transform-origin:0 0;">3</div>
<div class="t" style="left:2674.35px;top:475.77px;font-size:73.26px;color:#0787c8;-webkit-text-stroke:2.93px #0787c8;transform:scaleX(0.9738);transform-origin:0 0;">%</div>
<div class="t" style="left:1498.00px;top:590.00px;font-size:28.34px;color:#3a3955;font-weight:700;letter-spacing:0.15px;">1.7GHz</div>
<div class="t" style="left:1604.00px;top:594.10px;font-size:23.50px;color:#3a3955;-webkit-text-stroke:0.47px #ffffff;letter-spacing:-0.30px;">used</div>
<div class="t" style="left:1497.00px;top:628.50px;font-size:28.34px;color:#3a3955;font-weight:700;letter-spacing:0.35px;">7.2GHz</div>
<div class="t" style="left:1604.00px;top:632.60px;font-size:23.50px;color:#3a3955;-webkit-text-stroke:0.47px #ffffff;letter-spacing:-0.34px;">available</div>
<div class="t" style="left:2039.50px;top:590.00px;font-size:28.34px;color:#3a3955;font-weight:700;letter-spacing:-0.56px;">3.5GiB</div>
<div class="t" style="left:2136.00px;top:594.10px;font-size:23.50px;color:#3a3955;-webkit-text-stroke:0.47px #ffffff;letter-spacing:-0.20px;">used</div>
<div class="t" style="left:2023.70px;top:628.50px;font-size:28.34px;color:#3a3955;font-weight:700;letter-spacing:-0.46px;">35.2GiB</div>
<div class="t" style="left:2136.00px;top:632.60px;font-size:23.50px;color:#3a3955;-webkit-text-stroke:0.47px #ffffff;letter-spacing:-0.34px;">available</div>
<div class="t" style="left:2555.30px;top:590.00px;font-size:28.34px;color:#3a3955;font-weight:700;letter-spacing:-0.27px;">26.4GiB</div>
<div class="t" style="left:2667.50px;top:594.10px;font-size:23.50px;color:#3a3955;-webkit-text-stroke:0.47px #ffffff;letter-spacing:-0.06px;">used</div>
<div class="t" style="left:2538.50px;top:628.50px;font-size:28.34px;color:#3a3955;font-weight:700;letter-spacing:0.14px;">115.8GiB</div>
<div class="t" style="left:2667.50px;top:632.60px;font-size:23.50px;color:#3a3955;-webkit-text-stroke:0.47px #ffffff;letter-spacing:-0.25px;">available</div>
<div class="t" style="left:456.00px;top:795.42px;font-size:22.53px;color:#3a3955;letter-spacing:0.24px;">Details</div>
<div class="t" style="left:574.00px;top:795.42px;font-size:22.53px;color:#bdbcc8;letter-spacing:-0.07px;">Scale Masters</div>
<div class="t" style="left:764.00px;top:795.42px;font-size:22.53px;color:#3a3955;letter-spacing:0.11px;">Scale Workers</div>
<div class="t" style="left:959.50px;top:795.42px;font-size:22.53px;color:#bdbcc8;letter-spacing:0.25px;">Upgrade Cluster</div>
<div class="t" style="left:1176.00px;top:795.42px;font-size:22.53px;color:#3a3955;letter-spacing:0.49px;">Monitoring</div>
<div class="t" style="left:1348.00px;top:795.42px;font-size:22.53px;color:#3a3955;letter-spacing:-0.18px;">Edit</div>
<div class="t" style="left:1450.00px;top:795.42px;font-size:22.53px;color:#3a3955;letter-spacing:0.49px;">Delete</div>
<div class="t" style="left:2187.07px;top:765.73px;font-size:26.89px;color:#8f8e9c;-webkit-text-stroke:0.48px #8f8e9c;transform:scaleX(0.9254);transform-origin:0 0;">Search</div>
<div class="t" style="left:558.79px;top:870.95px;font-size:26.16px;color:#7c7b8c;-webkit-text-stroke:0.47px #7c7b8c;transform:scaleX(0.9530);transform-origin:0 0;">Name (1)</div>
<div class="t" style="left:747.72px;top:870.95px;font-size:26.16px;color:#7c7b8c;-webkit-text-stroke:0.47px #7c7b8c;transform:scaleX(0.9760);transform-origin:0 0;">Connection status</div>
<div class="t" style="left:1036.77px;top:870.95px;font-size:26.16px;color:#7c7b8c;-webkit-text-stroke:0.47px #7c7b8c;transform:scaleX(0.9629);transform-origin:0 0;">Health status</div>
<div class="t" style="left:1268.86px;top:870.95px;font-size:26.16px;color:#7c7b8c;-webkit-text-stroke:0.47px #7c7b8c;transform:scaleX(0.9698);transform-origin:0 0;">Links</div>
<div class="t" style="left:1413.03px;top:870.95px;font-size:26.16px;color:#7c7b8c;-webkit-text-stroke:0.47px #7c7b8c;transform:scaleX(0.9834);transform-origin:0 0;">Deployment</div>
<div class="t" style="left:1635.05px;top:870.95px;font-size:26.16px;color:#7c7b8c;-webkit-text-stroke:0.47px #7c7b8c;transform:scaleX(0.9736);transform-origin:0 0;">Resource Utilization</div>
<div class="t" style="left:2379.07px;top:870.95px;font-size:26.16px;color:#7c7b8c;-webkit-text-stroke:0.47px #7c7b8c;transform:scaleX(0.9629);transform-origin:0 0;">K8 Version</div>
<div class="t" style="left:2585.85px;top:870.95px;font-size:26.16px;color:#7c7b8c;-webkit-text-stroke:0.47px #7c7b8c;transform:scaleX(0.9453);transform-origin:0 0;">Created at</div>
<div class="t" style="left:782.00px;top:1006.29px;font-size:29.07px;color:#0aa4de;-webkit-text-stroke:0.44px #f1f9fd;letter-spacing:0.95px;">Connected</div>
<div class="t" style="left:1071.00px;top:1006.29px;font-size:29.07px;color:#0aa4de;-webkit-text-stroke:0.44px #f1f9fd;letter-spacing:0.50px;">Healthy</div>
<div class="t" style="left:1413.60px;top:1005.89px;font-size:29.07px;color:#222222;-webkit-text-stroke:0.44px #f1f9fd;letter-spacing:-0.52px;">BareOS</div>
<div class="t" style="left:1636.00px;top:965.89px;font-size:29.07px;color:#8a899a;-webkit-text-stroke:0.44px #f1f9fd;letter-spacing:-0.45px;">CPU:</div>
<div class="t" style="left:1635.00px;top:1005.89px;font-size:29.07px;color:#8a899a;-webkit-text-stroke:0.44px #f1f9fd;letter-spacing:0.64px;">Memory:</div>
<div class="t" style="left:1636.00px;top:1045.39px;font-size:29.07px;color:#8a899a;-webkit-text-stroke:0.44px #f1f9fd;letter-spacing:0.16px;">Storage:</div>
<div class="t" style="left:1753.00px;top:965.89px;font-size:29.07px;color:#222222;font-weight:700;letter-spacing:-0.48px;">1727.49</div>
<div class="t" style="left:1866.30px;top:965.89px;font-size:29.07px;color:#222222;-webkit-text-stroke:0.44px #f1f9fd;">/</div>
<div class="t" style="left:1881.00px;top:965.89px;font-size:29.07px;color:#222222;-webkit-text-stroke:0.44px #f1f9fd;letter-spacing:-0.48px;">7372.79</div>
<div class="t" style="left:1993.00px;top:965.89px;font-size:29.07px;color:#222222;-webkit-text-stroke:0.44px #f1f9fd;letter-spacing:-0.10px;">MHz</div>
<div class="t" style="left:1801.60px;top:1005.89px;font-size:29.07px;color:#222222;font-weight:700;letter-spacing:-1.00px;">3.48</div>
<div class="t" style="left:1866.30px;top:1005.89px;font-size:29.07px;color:#222222;-webkit-text-stroke:0.44px #f1f9fd;">/</div>
<div class="t" style="left:1881.00px;top:1005.89px;font-size:29.07px;color:#222222;-webkit-text-stroke:0.44px #f1f9fd;letter-spacing:-0.64px;">35.18</div>
<div class="t" style="left:1994.00px;top:1005.89px;font-size:29.07px;color:#222222;-webkit-text-stroke:0.44px #f1f9fd;letter-spacing:0.47px;">GiB</div>
<div class="t" style="left:1784.50px;top:1045.39px;font-size:29.07px;color:#222222;font-weight:700;letter-spacing:-0.52px;">26.39</div>
<div class="t" style="left:1866.30px;top:1045.39px;font-size:29.07px;color:#222222;-webkit-text-stroke:0.44px #f1f9fd;">/</div>
<div class="t" style="left:1880.00px;top:1045.39px;font-size:29.07px;color:#222222;-webkit-text-stroke:0.44px #f1f9fd;letter-spacing:0.21px;">115.79</div>
<div class="t" style="left:1994.00px;top:1045.39px;font-size:29.07px;color:#222222;-webkit-text-stroke:0.44px #f1f9fd;letter-spacing:0.47px;">GiB</div>
<div class="t" style="left:2287.70px;top:965.49px;font-size:29.07px;color:#222222;-webkit-text-stroke:0.44px #f1f9fd;letter-spacing:-0.11px;">22%</div>
<div class="t" style="left:2287.70px;top:1005.89px;font-size:29.07px;color:#222222;-webkit-text-stroke:0.44px #f1f9fd;letter-spacing:-0.11px;">10%</div>
<div class="t" style="left:2287.70px;top:1045.49px;font-size:29.07px;color:#222222;-webkit-text-stroke:0.44px #f1f9fd;letter-spacing:-0.11px;">23%</div>
<div class="t" style="left:2379.80px;top:1005.89px;font-size:29.07px;color:#222222;-webkit-text-stroke:0.44px #f1f9fd;letter-spacing:-0.68px;">1.18.10</div>
<div class="t" style="left:2586.00px;top:985.59px;font-size:29.07px;color:#222222;-webkit-text-stroke:0.44px #f1f9fd;letter-spacing:0.75px;">03/31/2021</div>
<div class="t" style="left:2586.00px;top:1025.29px;font-size:29.07px;color:#222222;-webkit-text-stroke:0.44px #f1f9fd;letter-spacing:-0.48px;">03:17 PM</div>
<div class="t" style="left:2786.50px;top:870.95px;font-size:26.16px;color:#7c7b8c;-webkit-text-stroke:0.47px #7c7b8c;letter-spacing:-0.6px;">Upd</div>
<div class="t" style="left:2787.50px;top:985.59px;font-size:29.07px;color:#222222;-webkit-text-stroke:0.44px #f1f9fd;">03/</div>
<div class="t" style="left:2787.50px;top:1025.29px;font-size:29.07px;color:#222222;-webkit-text-stroke:0.44px #f1f9fd;">08:17</div>
<div class="t" style="left:2076.60px;top:1163.27px;font-size:29.80px;color:#222222;-webkit-text-stroke:0.45px #ffffff;letter-spacing:-0.07px;">Rows per page:</div>
<div class="t" style="left:2315.00px;top:1161.77px;font-size:29.80px;color:#222222;-webkit-text-stroke:0.45px #ffffff;letter-spacing:-1.56px;">10</div>
<div class="t" style="left:2459.80px;top:1163.27px;font-size:29.80px;color:#222222;-webkit-text-stroke:0.45px #ffffff;letter-spacing:-0.32px;">1-1 of 1</div>
<div class="a" style="left:2832px;top:850px;width:84px;height:265px;background:#ffffff;"></div><div class="a" style="left:735.8px;top:719.2px;width:197px;height:118.8px;box-sizing:border-box;border:7.2px solid #ff2700;border-radius:24px;"></div><svg style="left:0;top:0" width="2916" height="1454" fill="none"><polygon points="2365,1170 2383,1170 2374,1179.5" fill="#757575"/><path d="M2650.8 1165.6 L2640.2 1175.2 L2650.8 1184.8" stroke="#bdbdbd" stroke-width="2.8"/><path d="M2732.2 1165.6 L2742.8 1175.2 L2732.2 1184.8" stroke="#bdbdbd" stroke-width="2.8"/></svg>
</body></html>
